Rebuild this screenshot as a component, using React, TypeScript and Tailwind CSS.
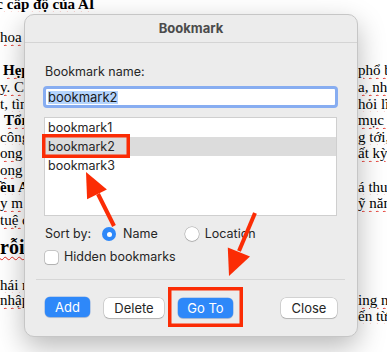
import type { ReactNode } from 'react';

type Line = { left?: ReactNode; right?: ReactNode };

const wavy = 'underline decoration-wavy decoration-[#e3261c] decoration-[1.2px] underline-offset-[2px]';

function W({ children, bold }: { children: ReactNode; bold?: boolean }) {
  return <span className={`${wavy} ${bold ? 'font-bold' : ''}`}>{children}</span>;
}

const topLines: Line[] = [
  { left: <span className="-ml-[22px] font-bold"><W bold>Các cấp độ của AI</W></span> },
  {},
  { left: <W>hoa h</W> },
  {},
  { left: <span className="ml-[3px] font-bold"><W bold>Hẹp</W></span>, right: <W>phổ biến</W> },
  { left: <W>y. Ch</W>, right: <W>a, nhiều</W> },
  { left: <W>t, tìm</W>, right: <W>hỏi lĩnh</W> },
  { left: <span className="ml-[4px] font-bold"><W bold>Tổng</W></span>, right: <W>mục tiêu</W> },
  { left: <W>công</W>, right: <W>g tới,</W> },
  { left: <W>ong c</W>, right: <W>ất kỳ</W> },
  { left: <W>ong n</W> },
  { left: <span className="font-bold"><W bold>ều A</W></span>, right: <W>á thuyết</W> },
  { left: <W>y m</W>, right: <W>ỹ năng</W> },
  { left: <W>tuệ c</W> },
];

const bottomLines: Line[] = [
  { left: <W>hái n</W> },
  { left: <W>nhập l</W>, right: <W>ing nhất</W> },
  { right: <W>ến từ</W> },
];

function DocRow({ line, height }: { line: Line; height: string }) {
  return (
    <div className={`grid grid-cols-[358px_29px] ${height}`}>
      <div className="overflow-hidden whitespace-nowrap">{line.left}</div>
      <div className="overflow-hidden whitespace-nowrap">{line.right}</div>
    </div>
  );
}

function Document() {
  return (
    <div className="-mt-[4.3px] font-['Liberation_Serif',serif] text-[15px] text-black">
      {topLines.map((line, i) => (
        <DocRow key={i} line={line} height="h-[16.65px] leading-[16.65px]" />
      ))}
      <div className="mt-[6px] h-[24px] whitespace-nowrap text-[20px] font-bold leading-[24px]">
        <W bold>rỗi</W>
      </div>
      <div className="mt-[19px]">
        {bottomLines.map((line, i) => (
          <DocRow key={i} line={line} height="h-[15.5px] leading-[15.5px]" />
        ))}
      </div>
    </div>
  );
}

function WhiteButton({ label, width }: { label: string; width: string }) {
  return (
    <button className={`${width} h-[20px] rounded-[5px] bg-white text-[13px] leading-[20px] text-[#262626] shadow-[0_0_0_0.5px_rgba(0,0,0,0.22),0_1px_1px_rgba(0,0,0,0.14)]`}>
      {label}
    </button>
  );
}

function BlueButton({ label, width }: { label: string; width: string }) {
  return (
    <button className={`${width} h-[20px] rounded-[5px] bg-[#2e88f9] text-[13px] leading-[20px] text-white shadow-[0_0_0_0.5px_rgba(0,90,220,0.4),0_1px_1px_rgba(0,0,0,0.12)]`}>
      {label}
    </button>
  );
}

function BookmarkDialog() {
  return (
    <div className="absolute left-[24px] top-[14px] flex h-[323px] w-[334px] flex-col rounded-[10px] border border-[#c6c6c6] bg-[#ececec] font-['Inter',sans-serif] text-[#262626] shadow-[0_10px_28px_rgba(0,0,0,0.28)]">
      <div className="flex h-[28px] items-center justify-center border-b border-[#d4d4d4] text-[13px] font-bold text-[#4b4b4b]">
        Bookmark
      </div>
      <div className="flex flex-col px-[19px] pt-[21px]">
        <div className="h-[16px] pl-[1px] text-[12.5px] leading-[16px]">Bookmark name:</div>
        <div className="-ml-[1px] mt-[6px] h-[22px] rounded-[4px] border-[3px] border-[#87adf1] bg-white">
          <div className="flex h-full items-center pl-[2px]">
            <span className="bg-[#b4d4fd] text-[13px] leading-[13px] text-[#1a1a1a]">bookmark2</span>
          </div>
        </div>
        <div className="mr-[1px] mt-[9px] h-[99px] border border-[#cfcfcf] bg-white text-[12.5px]">
          <div className="h-[19px] pl-[3px] leading-[19px]">bookmark1</div>
          <div className="h-[19px] bg-[#dcdcdc] pl-[3px] leading-[19px]">bookmark2</div>
          <div className="h-[19px] pl-[3px] leading-[19px]">bookmark3</div>
        </div>
        <div className="mt-[10px] flex h-[16px] items-center pl-[1px] text-[12.5px]">
          <span>Sort by:</span>
          <span className="ml-[11px] flex h-[14px] w-[14px] items-center justify-center rounded-full bg-[#2e88f9]">
            <span className="h-[5px] w-[5px] rounded-full bg-white" />
          </span>
          <span className="ml-[7px]">Name</span>
          <span className="ml-[27px] h-[14px] w-[14px] rounded-full bg-white shadow-[0_0_0_0.5px_rgba(0,0,0,0.3),0_1px_1px_rgba(0,0,0,0.12)]" />
          <span className="ml-[6px]">Location</span>
        </div>
        <div className="mt-[7px] flex h-[16px] items-center pl-[1px] text-[12.5px]">
          <span className="h-[13px] w-[13px] rounded-[3px] bg-white shadow-[0_0_0_0.5px_rgba(0,0,0,0.32),0_1px_1px_rgba(0,0,0,0.1)]" />
          <span className="ml-[6px]">Hidden bookmarks</span>
        </div>
        <div className="-ml-[8px] -mr-[7px] mt-[14px] h-px bg-[#d6d6d6]" />
        <div className="mt-[15px] flex items-center pl-[1px] pr-[1px]">
          <BlueButton label="Add" width="w-[45px]" />
          <span className="ml-[14px]"><WhiteButton label="Delete" width="w-[60px]" /></span>
          <span className="ml-[14px]"><BlueButton label="Go To" width="w-[55px]" /></span>
          <span className="ml-auto"><WhiteButton label="Close" width="w-[56px]" /></span>
        </div>
      </div>
    </div>
  );
}

function Annotations() {
  const red = '#fb2c05';
  return (
    <svg className="pointer-events-none absolute left-0 top-0" width="387" height="352" viewBox="0 0 387 352">
      <rect x="43.75" y="135.75" width="84.5" height="20.5" fill="none" stroke={red} strokeWidth="3.5" />
      <rect x="169.75" y="288.75" width="71.5" height="36.5" fill="none" stroke={red} strokeWidth="3.5" />
      <line x1="114" y1="226" x2="98" y2="194" stroke={red} strokeWidth="4" />
      <polygon points="86,172 106.9,189.6 87.1,199.3" fill={red} />
      <line x1="255" y1="213" x2="239" y2="251" stroke={red} strokeWidth="4" />
      <polygon points="229,276 250,256.6 227.8,247.4" fill={red} />
    </svg>
  );
}

export default function App() {
  return (
    <div className="relative h-[352px] w-[387px] overflow-hidden bg-white">
      <Document />
      <BookmarkDialog />
      <Annotations />
    </div>
  );
}
